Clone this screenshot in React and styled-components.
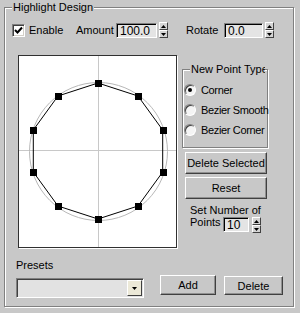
import React from 'react';
import styled, { createGlobalStyle } from 'styled-components';

const BG = '#c8c8c8';

const Global = createGlobalStyle`
  html, body { margin: 0; padding: 0; background: ${BG}; }
  body { font-family: "Liberation Sans", Arial, sans-serif; font-size: 11px; color: #000; }
`;

const Panel = styled.div`
  width: 300px;
  height: 313px;
  box-sizing: border-box;
  padding: 7px 0 0 4px;
  background: ${BG};
  overflow: hidden;
`;

const Group = styled.div`
  position: relative;
  box-sizing: border-box;
  width: ${p => p.$w}px;
  height: ${p => p.$h}px;
  margin: ${p => p.$m || '0'};
  border: 1px solid #808080;
  box-shadow: inset 1px 1px 0 #fff, 1px 1px 0 #fff;
  display: flex;
  flex-direction: column;
`;

const Legend = styled.div`
  position: absolute;
  top: -7px;
  left: ${p => p.$left}px;
  max-width: ${p => p.$max || 400}px;
  overflow: hidden;
  white-space: nowrap;
  padding: 0 1px;
  line-height: 13px;
  background: ${BG};
`;

const TopRow = styled.div`
  display: flex;
  align-items: center;
  height: 16px;
  margin-top: 14px;
  padding-left: 7px;
`;

const CheckBox = styled.div`
  box-sizing: border-box;
  width: 13px;
  height: 13px;
  flex-shrink: 0;
  background: #fff;
  border: 1px solid;
  border-color: #808080 #fff #fff #808080;
  box-shadow: inset 1px 1px 0 #404040, inset -1px -1px 0 #d4d0c8;
  display: flex;
  align-items: center;
  justify-content: center;
`;

const Label = styled.span`
  display: inline-block;
  flex-shrink: 0;
  width: ${p => p.$w}px;
  margin-left: ${p => p.$ml || 0}px;
  white-space: nowrap;
  line-height: 13px;
`;

const Field = styled.div`
  box-sizing: border-box;
  flex-shrink: 0;
  width: ${p => p.$w}px;
  height: ${p => p.$h || 15}px;
  margin-left: ${p => p.$ml || 0}px;
  background: #e4e4e4;
  border: 1px solid;
  border-color: #808080 #fff #fff #808080;
  box-shadow: inset 1px 1px 0 #000;
  padding: 1px 0 0 3px;
  line-height: 12px;
  font-size: 12px;
`;

const SpinBox = styled.div`
  display: flex;
  flex-direction: column;
  flex-shrink: 0;
  width: 9px;
  height: 16px;
  margin-left: ${p => p.$ml || 2}px;
`;

const SpinHalf = styled.div`
  box-sizing: border-box;
  flex: 1;
  background: #d4d4d4;
  border: 1px solid;
  border-color: #fff #404040 #404040 #fff;
  display: flex;
  align-items: center;
  justify-content: center;
`;

const MainRow = styled.div`
  display: flex;
  margin-top: 17px;
  padding-left: 13px;
`;

const Canvas = styled.div`
  box-sizing: border-box;
  width: 159px;
  height: 193px;
  background: #fff;
  border: 1px solid #303030;
  box-shadow: 1px 1px 0 #fff;
  flex-shrink: 0;
`;

const SideCol = styled.div`
  display: flex;
  flex-direction: column;
  margin-left: 5px;
  width: 86px;
`;

const RadioList = styled.div`
  display: flex;
  flex-direction: column;
  padding: 10px 0 0 1px;
`;

const RadioRow = styled.div`
  display: flex;
  align-items: center;
  height: 20px;
  white-space: nowrap;
  letter-spacing: -0.35px;
`;

const RadioDot = styled.div`
  box-sizing: border-box;
  flex-shrink: 0;
  width: 12px;
  height: 12px;
  border-radius: 50%;
  background: #f4f4f4;
  border: 1px solid;
  border-color: #808080 #fff #fff #808080;
  box-shadow: inset 1px 1px 0 #404040;
  margin-right: 5px;
  display: flex;
  align-items: center;
  justify-content: center;
  &::after {
    content: '';
    display: ${p => (p.$on ? 'block' : 'none')};
    width: 4px;
    height: 4px;
    border-radius: 50%;
    background: #000;
  }
`;

const Button = styled.div`
  box-sizing: border-box;
  width: ${p => p.$w}px;
  height: ${p => p.$h || 22}px;
  margin: ${p => p.$m || '0'};
  background: ${BG};
  border: 1px solid;
  border-color: #fff #404040 #404040 #fff;
  box-shadow: inset -1px -1px 0 #909090;
  display: flex;
  align-items: center;
  justify-content: center;
  white-space: nowrap;
  flex-shrink: 0;
`;

const PointsBlock = styled.div`
  margin: 5px 0 0 8px;
  line-height: 13px;
`;

const PointsRow = styled.div`
  display: flex;
  align-items: flex-start;
`;

const PointsLabel = styled.span`
  width: 33px;
  flex-shrink: 0;
  margin-top: -1px;
`;

const PresetsLabel = styled.div`
  margin: 11px 0 0 11px;
  line-height: 13px;
`;

const BottomRow = styled.div`
  display: flex;
  align-items: flex-start;
  margin-top: 3px;
  padding-left: 11px;
`;

const Combo = styled.div`
  box-sizing: border-box;
  width: 128px;
  height: 20px;
  margin-top: 3px;
  background: #e2e2e2;
  border: 1px solid;
  border-color: #808080 #fff #fff #808080;
  box-shadow: inset 1px 1px 0 #404040;
  display: flex;
  justify-content: flex-end;
  padding: 1px 1px 1px 0;
  flex-shrink: 0;
`;

const ComboArrow = styled.div`
  box-sizing: border-box;
  width: 15px;
  height: 16px;
  background: #ece9d8;
  border: 1px solid;
  border-color: #fff #404040 #404040 #fff;
  display: flex;
  align-items: center;
  justify-content: center;
`;

const Up = () => (
  <svg width="5" height="3" viewBox="0 0 5 3"><path d="M2.5 0 L5 3 L0 3 Z" fill="#000" /></svg>
);
const Down = () => (
  <svg width="5" height="3" viewBox="0 0 5 3"><path d="M0 0 L5 0 L2.5 3 Z" fill="#000" /></svg>
);

const Spinner = ({ ml }) => (
  <SpinBox $ml={ml}>
    <SpinHalf><Up /></SpinHalf>
    <SpinHalf><Down /></SpinHalf>
  </SpinBox>
);

const ShapeView = () => {
  const cx = 79, cy = 95, r = 68;
  const pts = Array.from({ length: 10 }, (_, i) => {
    const a = Math.PI / 2 - (i * Math.PI) / 5;
    return [cx + r * Math.cos(a), cy - r * Math.sin(a)];
  });
  const poly = pts.map(p => `${p[0].toFixed(1)},${p[1].toFixed(1)}`).join(' ');
  return (
    <svg width="157" height="191" viewBox="0 0 157 191" style={{ display: 'block' }}>
      <line x1="79.5" y1="0" x2="79.5" y2="191" stroke="#c8c8c8" />
      <line x1="0" y1="94.5" x2="157" y2="94.5" stroke="#c8c8c8" />
      <circle cx={cx + 0.5} cy={cy + 0.5} r={r + 1} fill="none" stroke="#b8b8b8" />
      <polygon points={poly} fill="none" stroke="#000" strokeWidth="1" />
      {pts.map((p, i) => (
        <rect key={i} x={Math.round(p[0]) - 3} y={Math.round(p[1]) - 3} width="7" height="7" fill="#000" />
      ))}
    </svg>
  );
};

const Check = () => (
  <svg width="9" height="9" viewBox="0 0 9 9">
    <path d="M1 4 L3.5 6.5 L8 1.5" fill="none" stroke="#000" strokeWidth="2" />
  </svg>
);

export default function App() {
  return (
    <>
      <Global />
      <Panel>
        <Group $w={290} $h={300}>
          <Legend $left={7}>Highlight Design</Legend>
          <TopRow>
            <CheckBox><Check /></CheckBox>
            <Label $w={47} $ml={4}>Enable</Label>
            <Label $w={40}>Amount</Label>
            <Field $w={41}>100.0</Field>
            <Spinner ml={2} />
            <Label $w={38} $ml={18}>Rotate</Label>
            <Field $w={39}>0.0</Field>
            <Spinner ml={2} />
          </TopRow>
          <MainRow>
            <Canvas><ShapeView /></Canvas>
            <SideCol>
              <Group $w={86} $h={79} $m="14px 0 0 0">
                <Legend $left={7} $max={73}>New Point Type</Legend>
                <RadioList>
                  <RadioRow><RadioDot $on />Corner</RadioRow>
                  <RadioRow><RadioDot />Bezier Smooth</RadioRow>
                  <RadioRow><RadioDot />Bezier Corner</RadioRow>
                </RadioList>
              </Group>
              <Button $w={82} $m="4px 0 0 3px">Delete Selected</Button>
              <Button $w={82} $m="3px 0 0 3px">Reset</Button>
              <PointsBlock>
                Set Number of
                <PointsRow>
                  <PointsLabel>Points</PointsLabel>
                  <Field $w={26} $h={15} $ml={0}>10</Field>
                  <Spinner ml={3} />
                </PointsRow>
              </PointsBlock>
            </SideCol>
          </MainRow>
          <PresetsLabel>Presets</PresetsLabel>
          <BottomRow>
            <Combo>
              <ComboArrow><Down /></ComboArrow>
            </Combo>
            <Button $w={56} $h={20} $m="0 0 0 16px">Add</Button>
            <Button $w={59} $h={19} $m="1px 0 0 8px">Delete</Button>
          </BottomRow>
        </Group>
      </Panel>
    </>
  );
}
